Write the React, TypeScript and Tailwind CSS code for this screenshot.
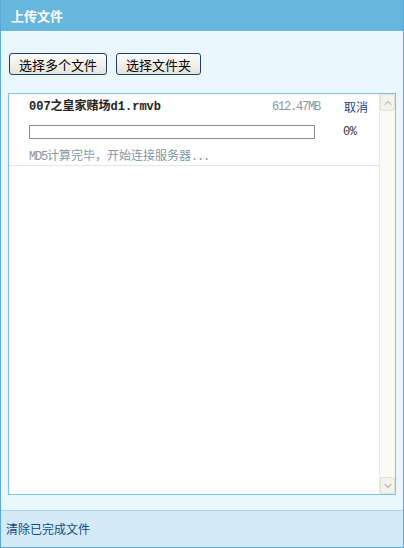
import { ChevronUp, ChevronDown } from "lucide-react";

const mono = "font-['Liberation_Mono','Noto_Sans_CJK_SC',monospace]";

function Btn({ label }: { label: string }) {
  return (
    <button className="h-[22px] rounded-[3px] border border-[#1c3f6e] bg-gradient-to-b from-[#fdfdfb] to-[#e6e3d9] px-[9px] text-[13px] leading-none text-black font-['Noto_Sans_CJK_SC',sans-serif]">
      {label}
    </button>
  );
}

export default function App() {
  return (
    <div className="flex h-[548px] w-[404px] flex-col border-x border-b border-[#5aa9d9] bg-[#eaf7fd] font-['Noto_Sans_CJK_SC',sans-serif] text-[12px]">
      <div className="flex h-[32px] shrink-0 items-center border-b border-[#f4fbff] bg-[#66b7dd] pl-[10px] text-[13px] font-bold text-white">
        上传文件
      </div>

      <div className="flex gap-[9px] pl-[8px] pt-[21px]">
        <Btn label="选择多个文件" />
        <Btn label="选择文件夹" />
      </div>

      <div className="mx-[7px] mt-[18px] flex h-[402px] shrink-0 border border-[#7cc3e8] bg-white">
        <div className="flex-1">
          <div className="border-b border-[#e6e6e6] pb-[2px] pl-[20px] pt-[5px]">
            <div className="flex h-[16px] items-center whitespace-nowrap">
              <span className={`${mono} w-[218px] text-[12px] font-bold text-[#222]`}>007之皇家赌场d1.rmvb</span>
              <span className={`${mono} w-[73px] text-right text-[12px] tracking-[-1.2px] text-[#8a97a3]`}>612.47MB</span>
              <span className="ml-[24px] text-[12px] text-[#1d3f83]">取消</span>
            </div>
            <div className="mt-[8px] flex items-center">
              <div className="h-[14px] w-[286px] border border-[#8a8a8a] bg-white" />
              <span className={`${mono} ml-[28px] text-[12px] tracking-[-0.5px] text-[#333]`}>0%</span>
            </div>
            <div className="mt-[6px] h-[16px] whitespace-nowrap text-[12px] leading-[16px] text-[#8496a7]">
              <span className={`${mono} tracking-[-1.2px]`}>MD5</span>计算完毕，开始连接服务器<span className={`${mono} tracking-[-1.2px]`}>...</span>
            </div>
          </div>
        </div>
        <div className="flex w-[16px] flex-col justify-between border-l border-[#ebebe4] bg-[#fbfbf6]">
          <div className="flex h-[17px] items-center justify-center rounded-[2px] border border-[#e4e2d8] bg-[#f3f2ec] text-[#c6c6c0]">
            <ChevronUp size={12} strokeWidth={3} />
          </div>
          <div className="flex h-[17px] items-center justify-center rounded-[2px] border border-[#e4e2d8] bg-[#f3f2ec] text-[#c6c6c0]">
            <ChevronDown size={12} strokeWidth={3} />
          </div>
        </div>
      </div>

      <div className="mt-[15px] flex flex-1 items-center border-t border-[#a9d3ec] bg-[#d4ebf7] pl-[5px] text-[12px] text-[#0e4b82]">
        清除已完成文件
      </div>
    </div>
  );
}
